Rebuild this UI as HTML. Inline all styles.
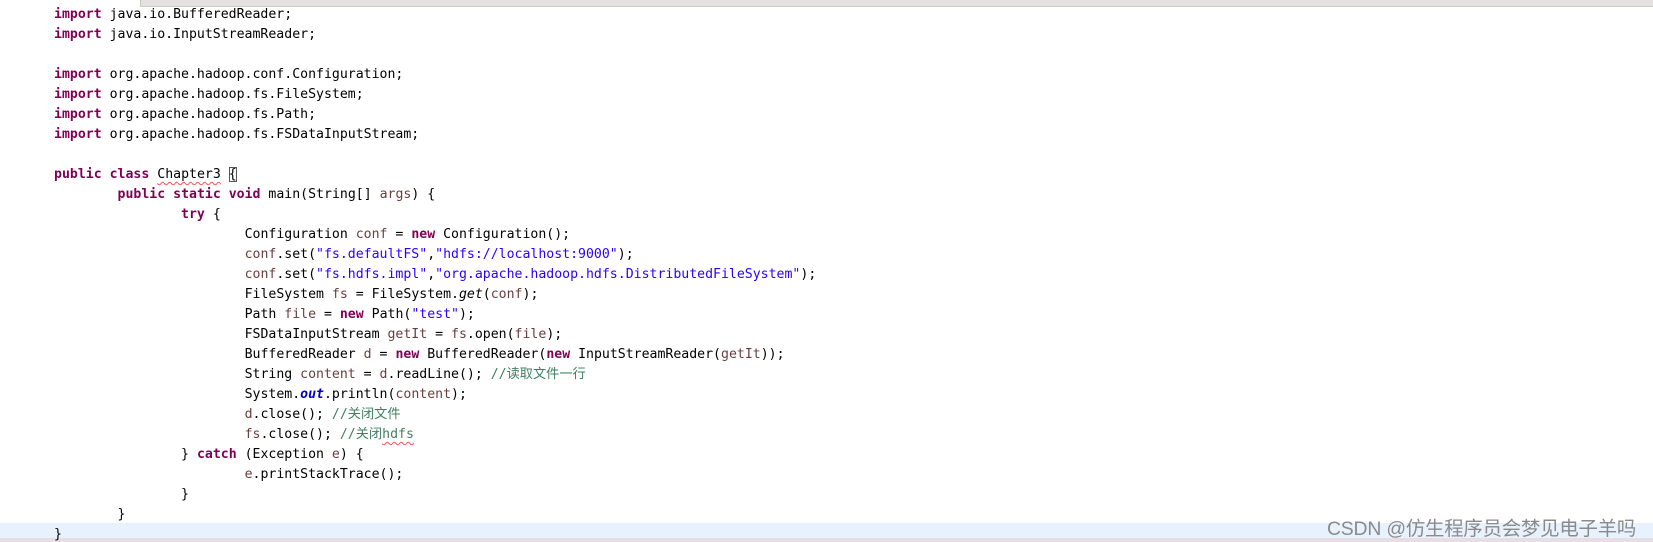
<!DOCTYPE html>
<html><head><meta charset="utf-8"><style>
html,body{margin:0;padding:0;width:1653px;height:542px;background:#fff;overflow:hidden;position:relative}
.topbar{position:absolute;left:140px;top:0;width:1513px;height:6px;background:#e4e1df;border-left:1px solid #c8c4c0;border-bottom:1px solid #cfcbc7}
.hl{position:absolute;left:0;top:523px;width:1653px;height:15px;background:#e8f2fe}
.pk{position:absolute;left:0;top:538px;width:1653px;height:4px;background:#e8dde2}
pre{position:absolute;left:54px;top:5px;margin:0;font-family:"DejaVu Sans Mono","Liberation Mono","Noto Sans CJK SC",monospace;font-size:13.2px;line-height:20px;color:#000;tab-size:8;-moz-tab-size:8}
.k{color:#7f0055;font-weight:bold}
.s{color:#2a00ff}
.v{color:#6a3e3e}
.c{color:#3f7f5f}
.f{color:#0000c0;font-weight:bold;font-style:italic}
.i{font-style:italic}
.sq{text-decoration:underline wavy #ff5050;text-decoration-thickness:1px;text-underline-offset:3px}
.bx{outline:1px solid #555;outline-offset:-1px}
.wm{position:absolute;left:1327px;top:512px;font-family:"Liberation Sans","Noto Sans CJK SC",sans-serif;font-size:19.4px;color:#8a8a8a;white-space:nowrap;letter-spacing:-0.2px}
</style></head><body>
<div class="topbar"></div>
<div class="hl"></div>
<div class="pk"></div>
<pre><span class="k">import</span> java.io.BufferedReader;
<span class="k">import</span> java.io.InputStreamReader;

<span class="k">import</span> org.apache.hadoop.conf.Configuration;
<span class="k">import</span> org.apache.hadoop.fs.FileSystem;
<span class="k">import</span> org.apache.hadoop.fs.Path;
<span class="k">import</span> org.apache.hadoop.fs.FSDataInputStream;

<span class="k">public</span> <span class="k">class</span> <span class="sq">Chapter3</span> <span class="bx">{</span>
	<span class="k">public</span> <span class="k">static</span> <span class="k">void</span> main(String[] <span class="v">args</span>) {
		<span class="k">try</span> {
			Configuration <span class="v">conf</span> = <span class="k">new</span> Configuration();
			<span class="v">conf</span>.set(<span class="s">"fs.defaultFS"</span>,<span class="s">"hdfs://localhost:9000"</span>);
			<span class="v">conf</span>.set(<span class="s">"fs.hdfs.impl"</span>,<span class="s">"org.apache.hadoop.hdfs.DistributedFileSystem"</span>);
			FileSystem <span class="v">fs</span> = FileSystem.<span class="i">get</span>(<span class="v">conf</span>);
			Path <span class="v">file</span> = <span class="k">new</span> Path(<span class="s">"test"</span>);
			FSDataInputStream <span class="v">getIt</span> = <span class="v">fs</span>.open(<span class="v">file</span>);
			BufferedReader <span class="v">d</span> = <span class="k">new</span> BufferedReader(<span class="k">new</span> InputStreamReader(<span class="v">getIt</span>));
			String <span class="v">content</span> = <span class="v">d</span>.readLine(); <span class="c">//读取文件一行</span>
			System.<span class="f">out</span>.println(<span class="v">content</span>);
			<span class="v">d</span>.close(); <span class="c">//关闭文件</span>
			<span class="v">fs</span>.close(); <span class="c">//关闭<span class="sq">hdfs</span></span>
		} <span class="k">catch</span> (Exception <span class="v">e</span>) {
			<span class="v">e</span>.printStackTrace();
		}
	}
}</pre>
<div class="wm">CSDN @仿生程序员会梦见电子羊吗</div>
</body></html>
